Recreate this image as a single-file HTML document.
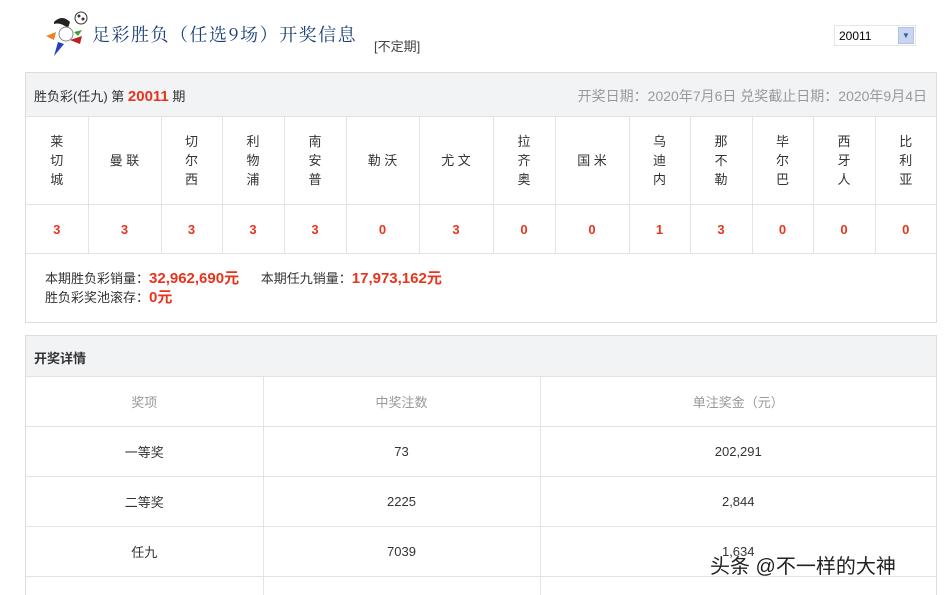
<!DOCTYPE html>
<html><head><meta charset="utf-8"><style>
*{margin:0;padding:0;box-sizing:border-box}
html,body{width:949px;height:595px;overflow:hidden}
body{background:#fff;font-family:"Liberation Sans","Microsoft YaHei","Noto Sans CJK SC",sans-serif;font-size:13px;color:#333;position:relative}
.abs{position:absolute}
.title{left:92px;top:21px;font-family:"Noto Serif CJK SC",serif;font-size:18px;color:#1a3f78;letter-spacing:1.5px}
.sel{left:834px;top:25px;width:82px;height:21px;border:1px solid #e6e6e6;font-size:12px;color:#000;padding:3px 0 0 4px}
.sel i{position:absolute;right:1px;top:1px;width:16px;height:17px;background:#c7d5ef;border:1px solid #b0c2e2;font-style:normal;color:#3a5a9a;font-size:8px;text-align:center;line-height:16px}
.box{left:25px;width:912px;border:1px solid #ddd}
table{border-collapse:collapse;width:100%}
td{border:1px solid #e3e3e3;text-align:center}
.red{color:#e8341c;font-weight:bold}
</style></head><body>
<svg class="abs" style="left:44px;top:10px" width="48" height="48" viewBox="0 0 48 48">
<circle cx="37" cy="8" r="6" fill="#fff" stroke="#333"/><circle cx="35" cy="6" r="1.5" fill="#333"/><circle cx="39" cy="9" r="1.5" fill="#333"/>
<path d="M10 12 Q18 4 26 12 L24 18 Q16 12 10 14Z" fill="#222"/>
<circle cx="22" cy="24" r="7" fill="#fff" stroke="#888"/>
<path d="M2 26 L12 22 L10 30Z" fill="#f08020"/>
<path d="M14 32 L20 34 L10 46Z" fill="#2040c0"/>
<path d="M26 30 L38 26 L36 34Z" fill="#c02020"/>
<path d="M30 22 L38 20 L34 26Z" fill="#40a040"/>
</svg>
<div class="abs title">足彩胜负（任选9场）开奖信息</div>
<div class="abs" style="left:374px;top:36px;font-size:13px;color:#444">[不定期]</div>
<div class="abs sel">20011<i>▼</i></div>

<div class="abs box" style="top:72px;height:251px">
<div style="height:44px;background:#f2f3f5;border-bottom:1px solid #e3e3e3;position:relative">
<span class="abs" style="left:8px;top:13px">胜负彩(任九) 第 <b style="color:#e8341c;font-size:15px">20011</b> 期</span>
<span class="abs" style="right:9px;top:13px;color:#999;font-size:14px">开奖日期：2020年7月6日 兑奖截止日期：2020年9月4日</span>
</div>
<table style="border:none;margin-top:-1px">
<tr style="height:88px;line-height:19px">
<td style="width:62px;border-left:none">莱<br>切<br>城</td><td style="width:73px">曼 联</td><td style="width:61px">切<br>尔<br>西</td><td style="width:62px">利<br>物<br>浦</td><td style="width:62px">南<br>安<br>普</td><td style="width:73px">勒 沃</td><td style="width:74px">尤 文</td><td style="width:62px">拉<br>齐<br>奥</td><td style="width:74px">国 米</td><td style="width:61px">乌<br>迪<br>内</td><td style="width:62px">那<br>不<br>勒</td><td style="width:61px">毕<br>尔<br>巴</td><td style="width:62px">西<br>牙<br>人</td><td style="border-right:none">比<br>利<br>亚</td>
</tr>
<tr style="height:49px" class="red">
<td style="border-left:none">3</td><td>3</td><td>3</td><td>3</td><td>3</td><td>0</td><td>3</td><td>0</td><td>0</td><td>1</td><td>3</td><td>0</td><td>0</td><td style="border-right:none">0</td>
</tr>
</table>
<div style="padding:15px 0 0 19px;line-height:19px">本期胜负彩销量：<span class="red" style="font-size:15px">32,962,690元</span>&nbsp;&nbsp;&nbsp;&nbsp;&nbsp; 本期任九销量：<span class="red" style="font-size:15px">17,973,162元</span><br>胜负彩奖池滚存：<span class="red" style="font-size:15px">0元</span></div>
</div>

<div class="abs box" style="top:335px;height:260px;border-bottom:none;overflow:hidden">
<div style="height:41px;background:#f2f3f5;border-bottom:1px solid #e3e3e3;padding:12px 0 0 8px;font-weight:bold">开奖详情</div>
<table style="margin-top:-1px">
<tr style="height:50px;color:#999"><td style="width:237px;border-left:none">奖项</td><td style="width:277px">中奖注数</td><td style="border-right:none">单注奖金（元）</td></tr>
<tr style="height:50px"><td style="border-left:none">一等奖</td><td>73</td><td style="border-right:none">202,291</td></tr>
<tr style="height:50px"><td style="border-left:none">二等奖</td><td>2225</td><td style="border-right:none">2,844</td></tr>
<tr style="height:50px"><td style="border-left:none">任九</td><td>7039</td><td style="border-right:none">1,634</td></tr>
<tr style="height:50px"><td style="border-left:none"></td><td></td><td style="border-right:none"></td></tr>
</table>
</div>
<div class="abs" style="left:710px;top:550px;font-size:20px;color:#222;text-shadow:0 0 3px #fff,0 0 3px #fff">头条 @不一样的大神</div>
</body></html>
